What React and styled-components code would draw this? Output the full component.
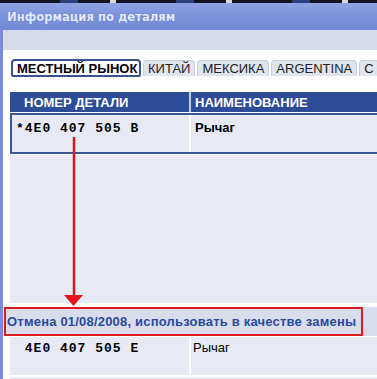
import React from "react";
import styled, { createGlobalStyle } from "styled-components";

const GlobalStyle = createGlobalStyle`
  html, body {
    margin: 0;
    padding: 0;
    background: #ffffff;
  }
`;

const Screen = styled.div`
  position: relative;
  width: 377px;
  height: 379px;
  overflow: hidden;
  background: #ffffff;
  font-family: "Liberation Sans", Arial, sans-serif;
`;

const TopStrip = styled.div`
  height: 3px;
  background: repeating-linear-gradient(
    90deg,
    #111522 0 60px,
    #2c3f7a 60px 78px,
    #111522 78px 110px,
    #d9d9d9 110px 116px
  );
`;

const TitleBar = styled.div`
  height: 27px;
  display: flex;
  align-items: center;
  padding-left: 7px;
  background: linear-gradient(180deg, #8fa4e4 0%, #7d94dc 45%, #7189d6 100%);
  color: #e2e9fa;
  font-family: "DejaVu Sans", Tahoma, sans-serif;
  font-weight: bold;
  font-size: 11.6px;
  text-shadow: 0 0 1px rgba(60, 80, 150, 0.6);
`;

const Body = styled.div`
  display: flex;
`;

const LeftStrip = styled.div`
  width: 3px;
  flex: none;
  background: #7c8ad9;
`;

const Main = styled.div`
  flex: 1;
  min-width: 0;
`;

const Band = styled.div`
  height: 20px;
  background: #d6dbea;
`;

const TabBar = styled.div`
  display: flex;
  align-items: flex-start;
  gap: 2px;
  height: 42px;
  padding: 9px 0 0 8px;
  box-sizing: border-box;
  white-space: nowrap;
`;

const Tab = styled.div`
  flex: none;
  display: flex;
  align-items: center;
  box-sizing: border-box;
  font-size: 13px;
  ${(p) =>
    p.$active
      ? `
    width: 130px;
    height: 18px;
    padding: 0 0 0 4px;
    background: #ffffff;
    border: 2px solid #3a5192;
    border-radius: 4px 4px 2px 2px;
    font-weight: bold;
    color: #000;
  `
      : `
    height: 16px;
    margin-top: 1px;
    padding: 0 4px;
    background: #dfe4ef;
    border: 1px solid #c8cfdf;
    border-bottom: none;
    border-radius: 4px 4px 0 0;
    color: #222;
  `}
`;

const Table = styled.div`
  margin-left: 7px;
`;

const HeaderRow = styled.div`
  display: grid;
  grid-template-columns: 179px 2px 1fr;
  height: 20px;
  background: #2e4d99;
  color: #ffffff;
  font-weight: bold;
  font-size: 13px;
`;

const HeadCell = styled.div`
  display: flex;
  align-items: center;
  padding-left: ${(p) => p.$pad}px;
`;

const HeadSep = styled.div`
  background: #c5cde4;
`;

const DataRow = styled.div`
  display: grid;
  grid-template-columns: ${(p) => (p.$framed ? "177px" : "179px")} 2px 1fr;
  height: ${(p) => p.$h}px;
  margin-top: 1px;
  box-sizing: border-box;
  ${(p) =>
    p.$framed
      ? `border: 2px solid #3b5796; border-right: none;`
      : ``}
`;

const Cell = styled.div`
  background: #e7eaf5;
  padding: ${(p) => p.$pt}px 0 0 ${(p) => p.$pl}px;
  color: #000;
`;

const Sep = styled.div`
  background: #ffffff;
`;

const PartNo = styled.span`
  font-family: "Liberation Mono", "Courier New", monospace;
  font-weight: bold;
  font-size: 13px;
  letter-spacing: 1px;
  line-height: 16px;
  white-space: pre;
`;

const PartName = styled.span`
  font-size: 13px;
  font-weight: ${(p) => (p.$bold ? "bold" : "normal")};
  line-height: 16px;
`;

const EmptyArea = styled.div`
  height: ${(p) => p.$h}px;
  margin-top: ${(p) => p.$mt}px;
  margin-left: 7px;
  background: #e7eaf5;
`;

const NoticeRow = styled.div`
  height: 29px;
  margin-top: 4px;
  padding-left: 1px;
  background: #d9ddeb;
  display: flex;
`;

const NoticeLabel = styled.div`
  width: 359px;
  height: 29px;
  box-sizing: border-box;
  border: 2px solid #e0191c;
  display: flex;
  align-items: center;
  padding-left: 1px;
  color: #2b4a9b;
  font-weight: bold;
  font-size: 13px;
  letter-spacing: 0.2px;
  white-space: nowrap;
`;

const Arrow = styled.svg`
  position: absolute;
  left: 0;
  top: 0;
  pointer-events: none;
`;

const tabs = ["МЕСТНЫЙ РЫНОК", "КИТАЙ", "МЕКСИКА", "ARGENTINA", "С"];

export default function App() {
  return (
    <Screen>
      <GlobalStyle />
      <TopStrip />
      <TitleBar>Информация по деталям</TitleBar>
      <Body>
        <LeftStrip />
        <Main>
          <Band />
          <TabBar>
            {tabs.map((t, i) => (
              <Tab key={t} $active={i === 0}>
                {t}
              </Tab>
            ))}
          </TabBar>
          <Table>
            <HeaderRow>
              <HeadCell $pad={14}>НОМЕР ДЕТАЛИ</HeadCell>
              <HeadSep />
              <HeadCell $pad={4}>НАИМЕНОВАНИЕ</HeadCell>
            </HeaderRow>
            <DataRow $framed $h={41}>
              <Cell $pt={3} $pl={4}>
                <PartNo>*4E0 407 505 B</PartNo>
              </Cell>
              <Sep />
              <Cell $pt={3} $pl={4}>
                <PartName $bold>Рычаг</PartName>
              </Cell>
            </DataRow>
          </Table>
          <EmptyArea $h={148} $mt={1} />
          <NoticeRow>
            <NoticeLabel>Отмена 01/08/2008, использовать в качестве замены</NoticeLabel>
          </NoticeRow>
          <Table>
            <DataRow $h={38}>
              <Cell $pt={1} $pl={6}>
                <PartNo> 4E0 407 505 E</PartNo>
              </Cell>
              <Sep />
              <Cell $pt={1} $pl={2}>
                <PartName>Рычаг</PartName>
              </Cell>
            </DataRow>
          </Table>
          <EmptyArea $h={10} $mt={2} />
        </Main>
      </Body>
      <Arrow width="377" height="379" viewBox="0 0 377 379">
        <line x1="74" y1="137" x2="74" y2="297" stroke="#e3141a" strokeWidth="2.5" />
        <polygon points="64,295 83,295 73.5,306" fill="#e3141a" />
      </Arrow>
    </Screen>
  );
}
